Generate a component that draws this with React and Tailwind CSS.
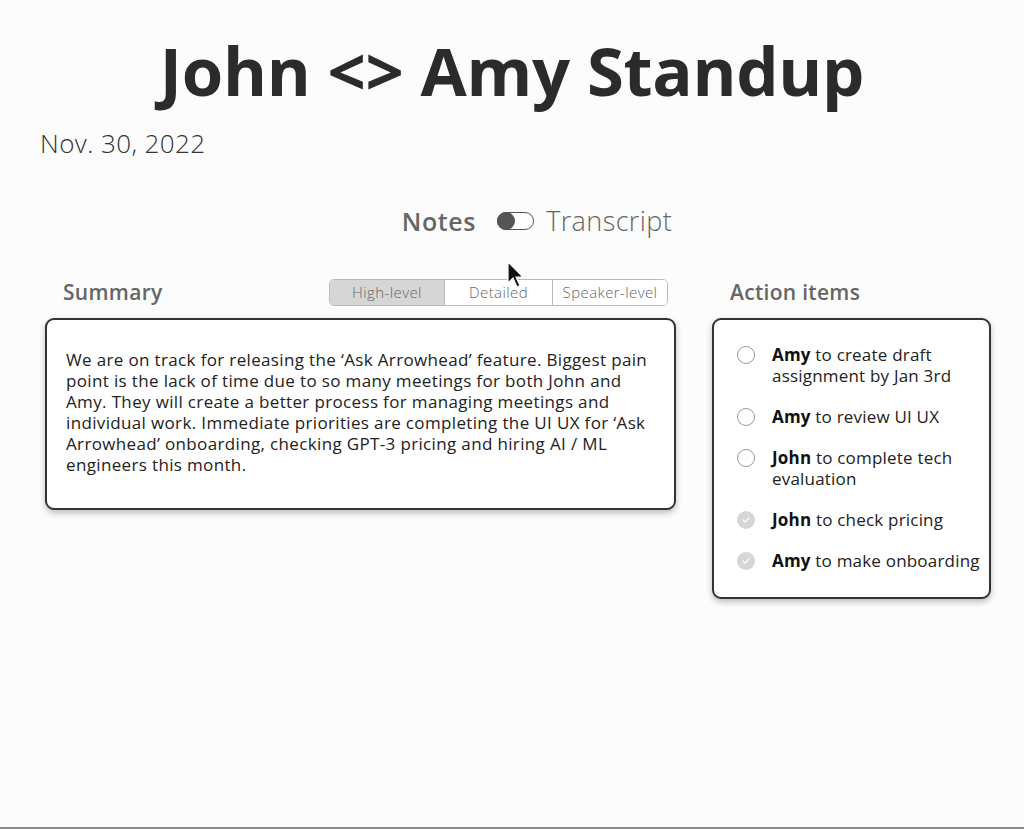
import React, { useState } from 'react';

const font = { fontFamily: '"Open Sans", Lato, sans-serif' };

const actionItems = [
  { who: 'Amy', text: 'to create draft assignment by Jan 3rd', done: false },
  { who: 'Amy', text: 'to review UI UX', done: false },
  { who: 'John', text: 'to complete tech evaluation', done: false },
  { who: 'John', text: 'to check pricing', done: true },
  { who: 'Amy', text: 'to make onboarding', done: true },
];

const CheckCircle = ({ done }) => {
  if (done) {
    return (
      <span className="mt-[2px] flex h-[18px] w-[18px] shrink-0 items-center justify-center rounded-full bg-[#d6d6d6]">
        <svg width="8" height="6" viewBox="0 0 8 6" fill="none">
          <path d="M1 3l2 2 4-4" stroke="#fff" strokeWidth="1.2" strokeLinecap="round" strokeLinejoin="round" />
        </svg>
      </span>
    );
  }
  return <span className="mt-[2px] h-[18px] w-[18px] shrink-0 rounded-full border border-[#9a9a9a] bg-white" />;
};

const App = () => {
  const [level, setLevel] = useState('High-level');
  const levels = ['High-level', 'Detailed', 'Speaker-level'];

  return (
    <div className="relative flex min-h-[829px] w-full flex-col bg-[#fcfcfc] text-[#222] border-b-2 border-[#8a8a8a]" style={font}>
      <h1 className="mt-[30px] h-[80px] text-center text-[67px] font-bold leading-[80px] tracking-[-0.3px] text-[#2b2b2b]">
        John &lt;&gt; Amy Standup
      </h1>
      <div className="mt-[18px] h-[30px] pl-[40px] text-[26px] font-light leading-[30px] tracking-[0.4px] text-[#333]">Nov. 30, 2022</div>

      <div className="mt-[48px] flex h-[30px] items-center justify-center pl-[50px] leading-[30px]">
        <span className="text-[25px] font-semibold tracking-[0.6px] text-[#666]">Notes</span>
        <span className="ml-[21px] flex h-[18px] w-[37px] items-center rounded-full border border-[#555] bg-white">
          <span className="ml-[-1px] h-[18px] w-[18px] rounded-full bg-[#555]" />
        </span>
        <span className="ml-[12px] text-[27px] font-light tracking-[0.4px] text-[#666]">Transcript</span>
      </div>

      <div className="mt-[42px] flex gap-[36px] pl-[45px] pr-[33px]">
        <div className="flex w-[631px] flex-col">
          <div className="flex h-[28px] items-center justify-between pl-[18px] pr-[8px]">
            <span className="text-[21px] font-semibold leading-[28px] tracking-[0.3px] text-[#666]">Summary</span>
            <div className="flex h-[27px] overflow-hidden rounded-[5px] border border-[#bbb] text-[15px] font-light tracking-[0.4px] text-[#666]">
              {levels.map((l, i) => (
                <button
                  key={l}
                  onClick={() => setLevel(l)}
                  className={`flex items-center justify-center ${i === 0 ? 'w-[114px]' : i === 1 ? 'w-[108px] border-l border-[#bbb]' : 'w-[115px] border-l border-[#bbb]'} ${level === l ? 'bg-[#d6d6d6]' : 'bg-white'}`}
                >
                  {l}
                </button>
              ))}
            </div>
          </div>
          <div className="mt-[12px] h-[192px] rounded-[9px] border-2 border-[#333] bg-white pl-[19px] pr-[24px] pt-[29px] text-[17px] leading-[21px] tracking-[0.35px] text-[#222] shadow-[0_3px_6px_rgba(0,0,0,0.25)]">
            We are on track for releasing the ‘Ask Arrowhead’ feature. Biggest pain point is the lack of time due to so many meetings for both John and Amy. They will create a better process for managing meetings and individual work. Immediate priorities are completing the UI UX for ‘Ask Arrowhead’ onboarding, checking GPT-3 pricing and hiring AI / ML engineers this month.
          </div>
        </div>

        <div className="flex w-[279px] flex-col">
          <div className="flex h-[28px] items-center pl-[18px]">
            <span className="text-[21px] font-semibold leading-[28px] tracking-[0.3px] text-[#666]">Action items</span>
          </div>
          <div className="mt-[12px] flex flex-col gap-[20px] rounded-[9px] border-2 border-[#333] bg-white pb-[26px] pl-[23px] pr-[4px] pt-[24px] shadow-[0_3px_6px_rgba(0,0,0,0.25)]">
            {actionItems.map((a, i) => (
              <div key={i} className="flex items-start gap-[17px]">
                <CheckCircle done={a.done} />
                <p className="text-[17px] leading-[21px] tracking-[0.2px] text-[#222]">
                  <b className="font-bold text-[#111]">{a.who}</b> {a.text}
                </p>
              </div>
            ))}
          </div>
        </div>
      </div>

      <svg className="absolute left-[507px] top-[261px]" width="18" height="28" viewBox="0 0 18 28">
        <path d="M1 1v21l5-5 4 9 3-1.5-4-8.5h7z" fill="#111" stroke="#fff" strokeWidth="1.2" />
      </svg>
    </div>
  );
};

export default App;
